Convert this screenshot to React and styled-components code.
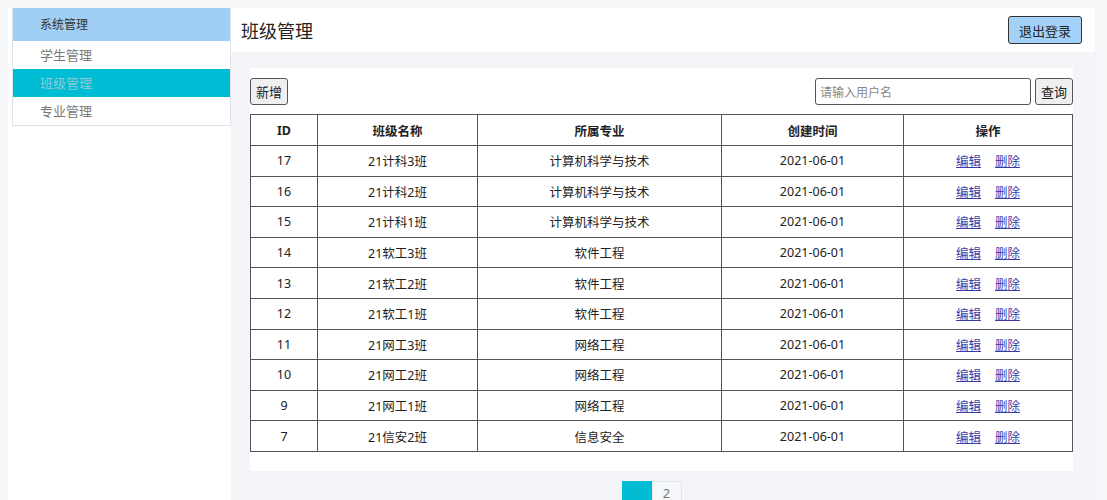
import React from 'react';
import { styled, createGlobalStyle } from 'styled-components';

const GlobalStyle = createGlobalStyle`
  html, body {
    margin: 0;
    background: #f7f8fa;
  }
  body {
    padding: 8px 8px 0 8px;
    font-family: "Noto Sans", "Noto Sans CJK SC", sans-serif;
  }
`;

const rows = [
  { id: 17, name: '21计科3班', major: '计算机科学与技术', date: '2021-06-01' },
  { id: 16, name: '21计科2班', major: '计算机科学与技术', date: '2021-06-01' },
  { id: 15, name: '21计科1班', major: '计算机科学与技术', date: '2021-06-01' },
  { id: 14, name: '21软工3班', major: '软件工程', date: '2021-06-01' },
  { id: 13, name: '21软工2班', major: '软件工程', date: '2021-06-01' },
  { id: 12, name: '21软工1班', major: '软件工程', date: '2021-06-01' },
  { id: 11, name: '21网工3班', major: '网络工程', date: '2021-06-01' },
  { id: 10, name: '21网工2班', major: '网络工程', date: '2021-06-01' },
  { id: 9, name: '21网工1班', major: '网络工程', date: '2021-06-01' },
  { id: 7, name: '21信安2班', major: '信息安全', date: '2021-06-01' },
];

const menu = ['学生管理', '班级管理', '专业管理'];

function App() {
  return (
    <>
      <GlobalStyle />
      <Layout>
        <Aside>
          <Menu>
            <MenuTitle>系统管理</MenuTitle>
            {menu.map((m) => (
              <MenuItem key={m} $active={m === '班级管理'}>{m}</MenuItem>
            ))}
          </Menu>
        </Aside>
        <Main>
          <Header>
            <Title>班级管理</Title>
            <LogoutButton>退出登录</LogoutButton>
          </Header>
          <Content>
            <Card>
              <Toolbar>
                <Button>新增</Button>
                <Search>
                  <SearchInput placeholder="请输入用户名" />
                  <Button>查询</Button>
                </Search>
              </Toolbar>
              <Table>
                <colgroup>
                  <col style={{ width: 67 }} />
                  <col style={{ width: 160 }} />
                  <col style={{ width: 244 }} />
                  <col style={{ width: 182 }} />
                  <col />
                </colgroup>
                <thead>
                  <tr>
                    <Th>ID</Th>
                    <Th>班级名称</Th>
                    <Th>所属专业</Th>
                    <Th>创建时间</Th>
                    <Th>操作</Th>
                  </tr>
                </thead>
                <tbody>
                  {rows.map((r) => (
                    <tr key={r.id}>
                      <Td>{r.id}</Td>
                      <Td>{r.name}</Td>
                      <Td>{r.major}</Td>
                      <Td>{r.date}</Td>
                      <Td>
                        <Action href="#">编辑</Action>
                        <Action href="#">删除</Action>
                      </Td>
                    </tr>
                  ))}
                </tbody>
              </Table>
            </Card>
            <Pager>
              <Page $active>1</Page>
              <Page>2</Page>
            </Pager>
          </Content>
        </Main>
      </Layout>
    </>
  );
}

const Layout = styled.div`
  display: flex;
  height: 492px;
  width: 1089px;
`;

const Aside = styled.aside`
  width: 223px;
  flex-shrink: 0;
  background: #ffffff;
  padding-left: 4px;
  box-sizing: border-box;
`;

const Menu = styled.div`
  border: 1px solid #dde3e8;
  border-top: none;
`;

const MenuTitle = styled.div`
  height: 33px;
  line-height: 33px;
  padding-left: 27px;
  background: #a0cef5;
  color: #333;
  font-size: 12px;
`;

const MenuItem = styled.div`
  height: 28px;
  line-height: 28px;
  padding-left: 27px;
  font-size: 13px;
  color: ${(p) => (p.$active ? '#8fc9d6' : '#777')};
  background: ${(p) => (p.$active ? '#00bcd4' : '#fff')};
`;

const Main = styled.main`
  flex: 1;
  background: #f3f5f8;
  display: flex;
  flex-direction: column;
  overflow: hidden;
`;

const Header = styled.header`
  flex-shrink: 0;
  height: 44px;
  background: #fff;
  display: flex;
  align-items: center;
  justify-content: space-between;
  padding: 0 13px 0 10px;
  margin-right: 2px;
`;

const Title = styled.h1`
  margin: 0;
  font-size: 18px;
  font-weight: normal;
  color: #222;
`;

const Button = styled.button`
  height: 27px;
  padding: 0 5px;
  font-family: "Noto Sans CJK SC", sans-serif;
  font-size: 13px;
  color: #222;
  background: #efefef;
  border: 1px solid #555;
  border-radius: 3px;
`;

const LogoutButton = styled(Button)`
  height: 28px;
  padding: 0 10px;
  background: #a3d1f7;
  border-color: #333;
`;

const Content = styled.div`
  flex-shrink: 0;
  padding: 16px 24px 0 19px;
`;

const Card = styled.section`
  background: #fff;
  padding: 10px 0 19px 0;
`;

const Toolbar = styled.div`
  display: flex;
  justify-content: space-between;
  align-items: center;
  margin-bottom: 9px;
`;

const Search = styled.div`
  display: flex;
  gap: 4px;
`;

const SearchInput = styled.input`
  width: 206px;
  height: 25px;
  padding: 0 4px;
  border: 1px solid #555;
  border-radius: 3px;
  font-family: "Noto Sans CJK SC", sans-serif;
  font-size: 12px;
  &::placeholder {
    color: #888;
  }
`;

const Table = styled.table`
  width: 100%;
  border-collapse: collapse;
  table-layout: fixed;
  font-size: 12.5px;
  color: #222;
`;

const Th = styled.th`
  height: 30px;
  border: 1px solid #555;
  font-weight: bold;
  text-align: center;
  padding: 0;
`;

const Td = styled.td`
  height: 29.6px;
  border: 1px solid #555;
  text-align: center;
  padding: 0;
`;

const Action = styled.a`
  color: #3b3ba8;
  text-decoration: underline;
  margin: 0 7px;
`;

const Pager = styled.div`
  display: flex;
  justify-content: center;
  padding-right: 20px;
  margin-top: 10px;
`;

const Page = styled.span`
  width: 28px;
  height: 22px;
  line-height: 22px;
  text-align: center;
  font-size: 13px;
  color: ${(p) => (p.$active ? '#2fb0c2' : '#777')};
  background: ${(p) => (p.$active ? '#00bcd4' : '#f6f7f9')};
  border: 1px solid ${(p) => (p.$active ? '#00bcd4' : '#e4e7ea')};
`;

export default App;
